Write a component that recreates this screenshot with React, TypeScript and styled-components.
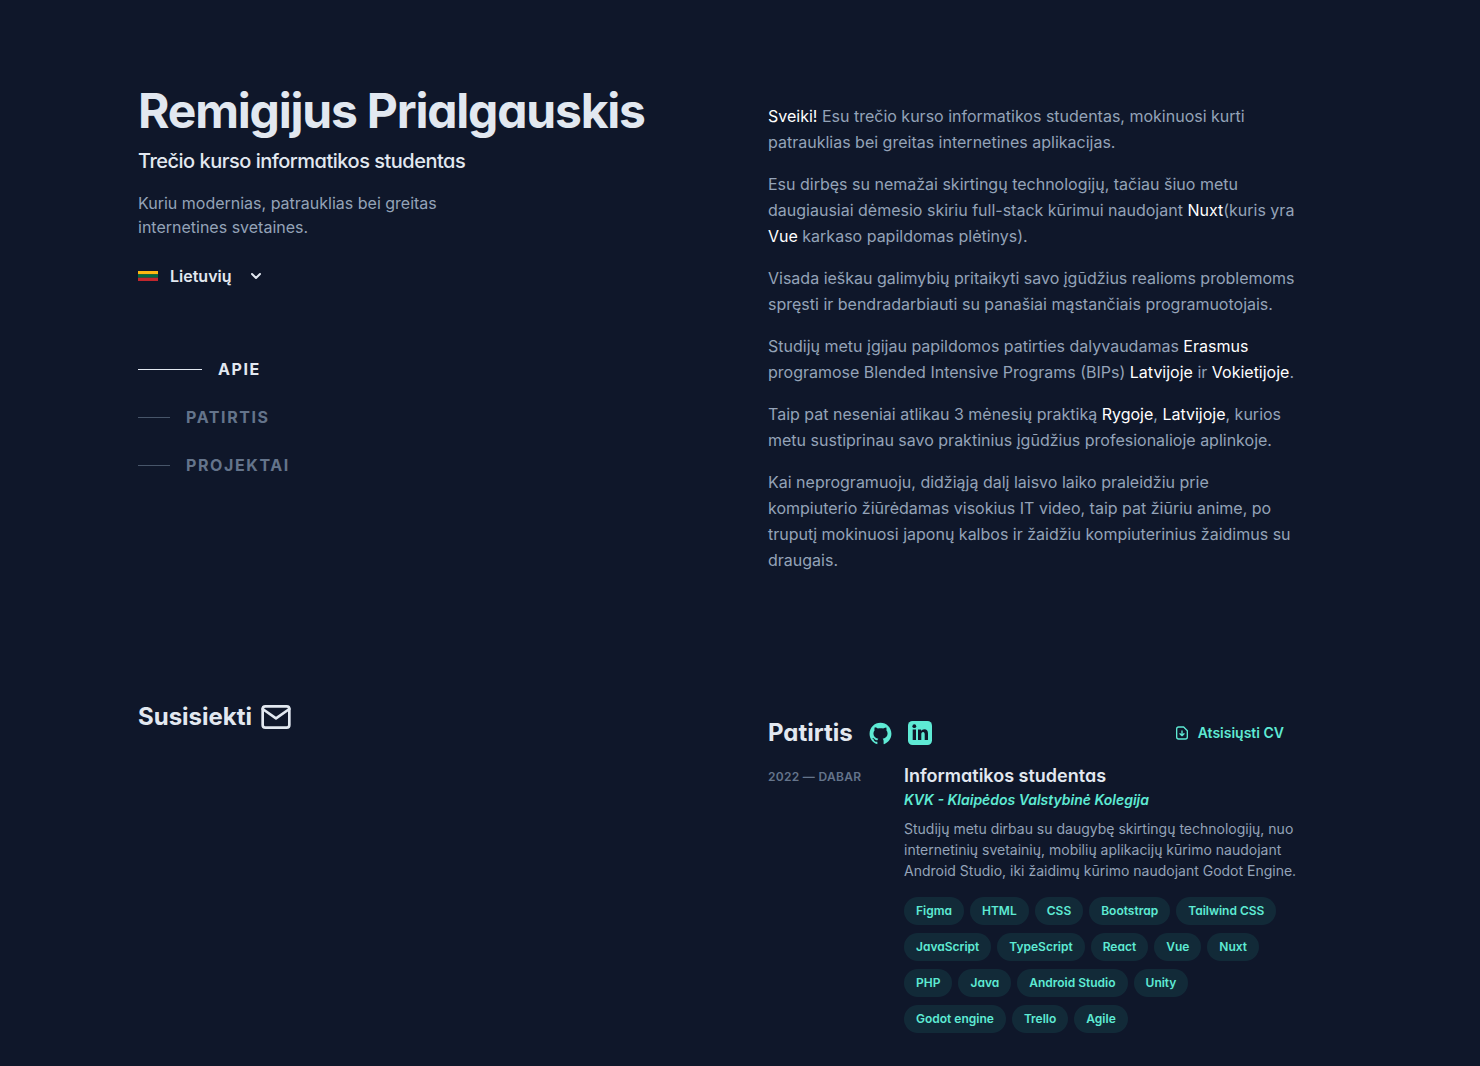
import React from 'react';
import styled, { createGlobalStyle } from 'styled-components';
import { AiOutlineGithub } from 'react-icons/ai';

const Global = createGlobalStyle`
  *, *::before, *::after { box-sizing: border-box; }
  html { background: #0f172a; }
  body {
    margin: 0;
    background: #0f172a;
    color: #94a3b8;
    font-family: Inter, "Liberation Sans", sans-serif;
    font-size: 16px;
    line-height: 24px;
  }
  h1, h2, h3, p, ul { margin: 0; padding: 0; }
  ul { list-style: none; }
  a { color: inherit; text-decoration: none; }
  svg { display: block; flex-shrink: 0; }
`;

const Page = styled.div`
  display: grid;
  grid-template-columns: minmax(0, 63fr) minmax(0, 53fr);
  max-width: 1280px;
  margin: 0 auto;
  padding: 0 82px 0 38px;
  min-height: 100vh;
`;

const Side = styled.header`
  display: flex;
  flex-direction: column;
  align-items: flex-start;
  padding-top: 87px;
`;

const Name = styled.h1`
  font-size: 48px;
  line-height: 48px;
  font-weight: 700;
  letter-spacing: -0.025em;
  color: #e2e8f0;
  white-space: nowrap;
  font-feature-settings: "cv11";
`;

const Role = styled.h2`
  margin-top: 12px;
  font-size: 20px;
  line-height: 28px;
  font-weight: 500;
  letter-spacing: -0.025em;
  color: #e2e8f0;
  font-feature-settings: "cv11";
`;

const Tagline = styled.p`
  max-width: 320px;
  margin-top: 16px;
`;

const LanguageButton = styled.button`
  display: flex;
  align-items: center;
  gap: 12px;
  margin-top: 25px;
  padding: 0;
  border: 0;
  background: none;
  color: #e2e8f0;
  font: inherit;
  font-weight: 600;
  cursor: pointer;
`;

const LanguageName = styled.span`
  margin-right: 6px;
`;

const Nav = styled.nav`
  margin-top: 69px;
`;

const NavList = styled.ul`
  display: flex;
  flex-direction: column;
  gap: 24px;
`;

const NavLink = styled.a<{ $active?: boolean }>`
  display: flex;
  align-items: center;
  gap: 16px;
  font-weight: 700;
  letter-spacing: 0.1em;
  text-transform: uppercase;
  color: ${p => (p.$active ? '#e2e8f0' : '#64748b')};

  &::before {
    content: '';
    width: ${p => (p.$active ? 64 : 32)}px;
    height: 1px;
    background: ${p => (p.$active ? '#e2e8f0' : '#475569')};
  }
`;

const Contact = styled.a`
  display: flex;
  align-items: center;
  gap: 8px;
  margin-top: 224px;
  font-size: 24px;
  line-height: 32px;
  font-weight: 700;
  color: #e2e8f0;
`;

const Main = styled.main`
  padding-top: 103px;
`;

const About = styled.section`
  display: flex;
  flex-direction: column;
  gap: 16px;
  line-height: 26px;
`;

const Strong = styled.span`
  color: #ffffff;
`;

const Experience = styled.section`
  margin-top: 144px;
`;

const ExperienceHeader = styled.div`
  display: flex;
  align-items: center;
  gap: 15px;
  color: #5eead4;
`;

const SectionTitle = styled.h2`
  font-size: 24px;
  line-height: 32px;
  font-weight: 700;
  color: #e2e8f0;
  font-feature-settings: "cv11";
`;

const Download = styled.a`
  display: flex;
  align-items: center;
  gap: 8px;
  margin-left: auto;
  padding-right: 14px;
  font-size: 14px;
  line-height: 20px;
  font-weight: 600;
  color: #5eead4;
`;

const Job = styled.article`
  display: grid;
  grid-template-columns: 120px minmax(0, 1fr);
  column-gap: 16px;
  margin-top: 16px;
`;

const Period = styled.p`
  padding-top: 4px;
  font-size: 12px;
  line-height: 16px;
  font-weight: 600;
  letter-spacing: 0.025em;
  text-transform: uppercase;
  color: #64748b;
`;

const JobTitle = styled.h3`
  font-size: 18px;
  line-height: 22px;
  font-weight: 600;
  color: #e2e8f0;
  font-feature-settings: "cv11";
`;

const School = styled.p`
  margin-top: 3px;
  font-size: 14px;
  line-height: 20px;
  font-weight: 600;
  font-style: italic;
  color: #5eead4;
  font-feature-settings: "cv11";
`;

const Summary = styled.p`
  margin-top: 8px;
  font-size: 14px;
  line-height: 21px;
`;

const Tags = styled.ul`
  display: flex;
  flex-wrap: wrap;
  row-gap: 8px;
  margin-top: 16px;
`;

const Tag = styled.li`
  margin-right: 6px;
  padding: 4px 12px;
  border-radius: 14px;
  background: rgba(45, 212, 191, 0.1);
  font-size: 12px;
  line-height: 20px;
  font-weight: 600;
  color: #5eead4;
  font-feature-settings: "cv11";
`;

const Flag = () => (
  <svg width="20" height="10" viewBox="0 0 20 10" aria-hidden="true">
    <path fill="#fdb913" d="M0 0h20v3.4H0z" />
    <path fill="#006a44" d="M0 3.3h20v3.5H0z" />
    <path fill="#c1272d" d="M0 6.7h20V10H0z" />
  </svg>
);

const Chevron = () => (
  <svg width="12" height="12" viewBox="0 0 12 12" fill="none" stroke="currentColor" strokeWidth="2" strokeLinecap="round" strokeLinejoin="round" aria-hidden="true">
    <path d="M2 4l4 4 4-4" />
  </svg>
);

const Mail = () => (
  <svg width="32" height="32" viewBox="0 0 24 24" fill="none" stroke="currentColor" strokeWidth="2" strokeLinecap="round" strokeLinejoin="round" aria-hidden="true">
    <rect x="2" y="4" width="20" height="16" rx="2" />
    <path d="M22 6l-10 7L2 6" />
  </svg>
);

const Linkedin = () => (
  <svg width="24" height="24" viewBox="0 0 24 24" aria-hidden="true">
    <rect width="24" height="24" rx="4.5" fill="currentColor" />
    <g fill="#0f172a">
      <circle cx="6.3" cy="5.2" r="1.9" />
      <path d="M4.7 8.5H8V19H4.7zM10 8.5h3.1v1.500c.7-1.100 1.800-1.800 3.200-1.800 2.700 0 3.700 1.700 3.700 4.500V19h-3.300v-5.600c0-1.500-.4-2.400-1.600-2.400-1.300 0-1.800 1-1.800 2.400V19H10z" />
    </g>
  </svg>
);

const FileDown = () => (
  <svg width="16" height="16" viewBox="0 0 24 24" fill="none" stroke="currentColor" strokeWidth="2" strokeLinecap="round" strokeLinejoin="round" aria-hidden="true">
    <path d="M14.500 3H7a3 3 0 0 0-3 3v12a3 3 0 0 0 3 3h10a3 3 0 0 0 3-3V8.500z" />
    <path d="M12 9v7M9 13l3 3 3-3" />
  </svg>
);

const sections = ['Apie', 'Patirtis', 'Projektai'];
const skills = [
  'Figma', 'HTML', 'CSS', 'Bootstrap', 'Tailwind CSS', 'JavaScript', 'TypeScript', 'React', 'Vue', 'Nuxt',
  'PHP', 'Java', 'Android Studio', 'Unity', 'Godot engine', 'Trello', 'Agile',
];

export default function App() {
  return (
    <>
      <Global />
      <Page>
        <Side>
          <Name>Remigijus Prialgauskis</Name>
          <Role>Trečio kurso informatikos studentas</Role>
          <Tagline>Kuriu modernias, patrauklias bei greitas internetines svetaines.</Tagline>
          <LanguageButton type="button" aria-haspopup="listbox">
            <Flag />
            <LanguageName>Lietuvių</LanguageName>
            <Chevron />
          </LanguageButton>
          <Nav>
            <NavList>
              {sections.map((s, i) => (
                <li key={s}>
                  <NavLink href={`#${s.toLowerCase()}`} $active={i === 0}>{s}</NavLink>
                </li>
              ))}
            </NavList>
          </Nav>
          <Contact href="#susisiekti">Susisiekti <Mail /></Contact>
        </Side>
        <Main>
          <About id="apie">
            <p><Strong>Sveiki!</Strong> Esu trečio kurso informatikos studentas, mokinuosi kurti patrauklias bei greitas internetines aplikacijas.</p>
            <p>Esu dirbęs su nemažai skirtingų technologijų, tačiau šiuo metu daugiausiai dėmesio skiriu full-stack kūrimui naudojant <Strong>Nuxt</Strong>(kuris yra <Strong>Vue</Strong> karkaso papildomas plėtinys).</p>
            <p>Visada ieškau galimybių pritaikyti savo įgūdžius realioms problemoms spręsti ir bendradarbiauti su panašiai mąstančiais programuotojais.</p>
            <p>Studijų metu įgijau papildomos patirties dalyvaudamas <Strong>Erasmus</Strong> programose Blended Intensive Programs (BIPs) <Strong>Latvijoje</Strong> ir <Strong>Vokietijoje</Strong>.</p>
            <p>Taip pat neseniai atlikau 3 mėnesių praktiką <Strong>Rygoje</Strong>, <Strong>Latvijoje</Strong>, kurios metu sustiprinau savo praktinius įgūdžius profesionalioje aplinkoje.</p>
            <p>Kai neprogramuoju, didžiąją dalį laisvo laiko praleidžiu prie kompiuterio žiūrėdamas visokius IT video, taip pat žiūriu anime, po truputį mokinuosi japonų kalbos ir žaidžiu kompiuterinius žaidimus su draugais.</p>
          </About>
          <Experience id="patirtis">
            <ExperienceHeader>
              <SectionTitle>Patirtis</SectionTitle>
              <a href="#github" aria-label="GitHub"><AiOutlineGithub size={25} /></a>
              <a href="#linkedin" aria-label="LinkedIn"><Linkedin /></a>
              <Download href="#cv"><FileDown />Atsisiųsti CV</Download>
            </ExperienceHeader>
            <Job>
              <Period>2022 — Dabar</Period>
              <div>
                <JobTitle>Informatikos studentas</JobTitle>
                <School>KVK - Klaipėdos Valstybinė Kolegija</School>
                <Summary>Studijų metu dirbau su daugybę skirtingų technologijų, nuo internetinių svetainių, mobilių aplikacijų kūrimo naudojant Android Studio, iki žaidimų kūrimo naudojant Godot Engine.</Summary>
                <Tags>{skills.map(s => <Tag key={s}>{s}</Tag>)}</Tags>
              </div>
            </Job>
          </Experience>
        </Main>
      </Page>
    </>
  );
}
